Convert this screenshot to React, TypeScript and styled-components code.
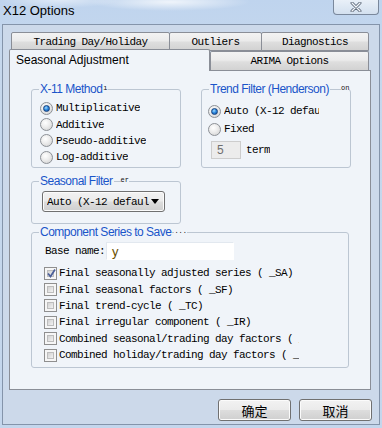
import styled, { createGlobalStyle } from 'styled-components';

const MONO = `"Liberation Mono", "DejaVu Sans Mono", monospace`;
const SANS = `"Liberation Sans", Arial, sans-serif`;
const CJK = `"Liberation Sans", "Noto Sans CJK SC", sans-serif`;
const PANEL_BG = '#f0f4f9';

const GlobalStyle = createGlobalStyle`
  html, body {
    margin: 0;
    padding: 0;
  }
  body {
    width: 382px;
    height: 428px;
    overflow: hidden;
    background: #c4d6ec;
    font-family: ${SANS};
  }
`;

const Window = styled.div`
  width: 382px;
  height: 428px;
  display: flex;
  flex-direction: column;
  box-sizing: border-box;
  background:
    radial-gradient(ellipse 80px 9px at 170px 2px, rgba(255, 255, 255, 0.75), rgba(255, 255, 255, 0)),
    radial-gradient(ellipse 60px 8px at 60px 0px, rgba(255, 255, 255, 0.5), rgba(255, 255, 255, 0)),
    linear-gradient(#bfd4ee, #c6d8ed 60px, #c4d6ec);
`;

const TitleBar = styled.div`
  height: 24px;
  flex-shrink: 0;
  display: flex;
  justify-content: space-between;
  align-items: flex-start;
  padding: 0 3px 0 3px;
  box-sizing: border-box;
`;

const Title = styled.div`
  font: 13px ${SANS};
  line-height: 21px;
  color: #000;
`;

const CloseButton = styled.div`
  width: 46px;
  height: 15px;
  box-sizing: border-box;
  border: 1px solid #7a889c;
  border-top: none;
  border-radius: 0 0 4px 4px;
  background: linear-gradient(#e9f0f8, #d3e0ef);
  display: flex;
  align-items: center;
  justify-content: center;
`;

const Client = styled.div`
  flex: 1;
  margin: 0 2px 3px 2px;
  border: 1px solid #8494aa;
  background: #ccd9ea;
  padding: 7px 0 0 6px;
  box-sizing: border-box;
  display: flex;
  flex-direction: column;
`;

const Tabs = styled.div`
  width: 362px;
  display: flex;
  flex-direction: column;
`;

const TabRow = styled.div<{ $top?: boolean }>`
  display: flex;
  align-items: flex-end;
  height: ${p => (p.$top ? '19px' : '21px')};
  padding-left: ${p => (p.$top ? '2px' : '0')};
  margin-top: ${p => (p.$top ? '0' : '-2px')};
  position: relative;
`;

const Tab = styled.div<{ $w: number }>`
  width: ${p => p.$w}px;
  height: 19px;
  box-sizing: border-box;
  border: 1px solid #8a8e97;
  border-radius: 2px 2px 0 0;
  margin-right: -1px;
  background: linear-gradient(#f3f3f3, #ebebeb 45%, #dedede 55%, #d2d2d2);
  font: 11px ${MONO};
  letter-spacing: -0.6px;
  color: #000;
  display: flex;
  align-items: center;
  justify-content: center;
`;

const LowerTab = styled(Tab)`
  border-bottom: none;
  height: 19px;
`;

const ActiveTab = styled.div`
  width: 201px;
  height: 22px;
  margin-bottom: -1px;
  box-sizing: border-box;
  border: 1px solid #8a8e97;
  border-bottom: none;
  border-radius: 2px 2px 0 0;
  background: ${PANEL_BG};
  position: relative;
  z-index: 1;
  font: 12px ${SANS};
  color: #000;
  padding: 3px 0 0 6px;
`;

const Panel = styled.div`
  width: 362px;
  height: 320px;
  box-sizing: border-box;
  border: 1px solid #8a8e97;
  background: ${PANEL_BG};
  padding: 18px 0 0 21px;
  display: flex;
  flex-direction: column;
`;

const GroupRow = styled.div`
  display: flex;
  gap: 20px;
`;

const Group = styled.div<{ $w: number; $h: number; $mt?: number; $pt: number; $pl: number }>`
  position: relative;
  width: ${p => p.$w}px;
  height: ${p => p.$h}px;
  margin-top: ${p => p.$mt ?? 0}px;
  box-sizing: border-box;
  border: 1px solid #bcc6d2;
  border-radius: 3px;
  padding: ${p => p.$pt}px 0 0 ${p => p.$pl}px;
  display: flex;
  flex-direction: column;
`;

const Legend = styled.div`
  position: absolute;
  top: -8px;
  left: 7px;
  display: flex;
  align-items: flex-start;
`;

const LegendText = styled.span`
  background: ${PANEL_BG};
  padding: 0 1px;
  font: 12px ${SANS};
  letter-spacing: -0.5px;
  line-height: 14px;
  color: #1a55c9;
  white-space: nowrap;
`;

// leftover bits of a clipped caption, drawn above the frame line
const Residue = styled.span<{ $gap: number }>`
  margin-left: ${p => p.$gap}px;
  margin-top: 3px;
  background: ${PANEL_BG};
  font: 7px ${MONO};
  line-height: 7px;
  color: #111;
  white-space: nowrap;
`;

const OptionRow = styled.div<{ $h: number }>`
  height: ${p => p.$h}px;
  display: flex;
  align-items: center;
  gap: 3px;
`;

const Label = styled.span<{ $w?: number }>`
  font: 11px ${MONO};
  letter-spacing: -0.6px;
  color: #000;
  white-space: nowrap;
  overflow: hidden;
  ${p => (p.$w ? `width: ${p.$w}px;` : '')}
`;

const RadioCircle = styled.span<{ $on?: boolean }>`
  width: 13px;
  height: 13px;
  flex-shrink: 0;
  box-sizing: border-box;
  border-radius: 50%;
  border: 1px solid #8c9096;
  background: radial-gradient(circle at 40% 35%, #ffffff 0%, #ececec 45%, #cdcdcd 100%);
  display: flex;
  align-items: center;
  justify-content: center;
  &::after {
    content: '';
    display: ${p => (p.$on ? 'block' : 'none')};
    width: 7px;
    height: 7px;
    box-sizing: border-box;
    border-radius: 50%;
    border: 1px solid #17407c;
    background: radial-gradient(circle at 40% 35%, #a6dcff 0%, #2d8ae0 45%, #0d4a9c 100%);
  }
`;

const BoxOuter = styled.span`
  width: 13px;
  height: 13px;
  flex-shrink: 0;
  box-sizing: border-box;
  border: 1px solid #8f8f8f;
  background: #f6f6f6;
  padding: 2px;
  display: flex;
  position: relative;
`;

const BoxInner = styled.span`
  flex: 1;
  border: 1px solid #bdbdbd;
  background: linear-gradient(135deg, #d2d2d2, #f2f2f2);
`;

const CheckMark = styled.svg`
  position: absolute;
  left: 1px;
  top: 0px;
`;

const TermInput = styled.div`
  width: 30px;
  height: 18px;
  box-sizing: border-box;
  border: 1px solid #cdcdcd;
  background: #ececec;
  font: 12px ${SANS};
  color: #6f6f6f;
  padding-left: 5px;
  line-height: 16px;
`;

const TermRow = styled.div`
  display: flex;
  align-items: center;
  gap: 5px;
  margin: 3px 0 0 3px;
`;

const Select = styled.div`
  width: 123px;
  height: 21px;
  box-sizing: border-box;
  border: 1px solid #707070;
  border-radius: 3px;
  box-shadow: inset 0 0 0 1px #fbfbfb;
  background: linear-gradient(#f2f2f2, #ebebeb 48%, #dddddd 52%, #cfcfcf);
  display: flex;
  align-items: center;
  justify-content: space-between;
  padding: 0 5px 0 4px;
`;

const BaseRow = styled.div`
  display: flex;
  align-items: center;
  gap: 1px;
  padding-left: 1px;
  margin-bottom: 5px;
`;

const TextBox = styled.div`
  width: 128px;
  height: 18px;
  box-sizing: border-box;
  border: 1px solid #e2e8ef;
  border-bottom-color: #ffffff;
  border-right-color: #ffffff;
  background: #ffffff;
  font: 13px ${SANS};
  color: #6a5000;
  padding-left: 5px;
  line-height: 17px;
`;

const CheckList = styled.div`
  display: flex;
  flex-direction: column;
`;

const CheckRow = styled.div`
  height: 16.4px;
  display: flex;
  align-items: center;
  gap: 2px;
`;

const ButtonRow = styled.div`
  width: 363px;
  display: flex;
  justify-content: flex-end;
  gap: 8px;
  margin-top: 9px;
`;

const Button = styled.div`
  width: 73px;
  height: 22px;
  box-sizing: border-box;
  border: 1px solid #707070;
  border-radius: 3px;
  box-shadow: inset 0 0 0 1px #fbfbfb;
  background: linear-gradient(#f2f2f2, #ebebeb 48%, #dddddd 52%, #cfcfcf);
  font: 13px ${CJK};
  color: #000;
  display: flex;
  align-items: center;
  justify-content: center;
`;

const Radio: React.FC<{ on?: boolean; label: string; h: number; w?: number }> = ({ on, label, h, w }) => (
  <OptionRow $h={h}>
    <RadioCircle $on={on} />
    <Label $w={w}>{label}</Label>
  </OptionRow>
);

const Check: React.FC<{ on?: boolean; label: string }> = ({ on, label }) => (
  <CheckRow>
    <BoxOuter>
      <BoxInner />
      {on && (
        <CheckMark width="11" height="11" viewBox="0 0 11 11">
          <path d="M2 5.5 L4.5 8.5 L9 1.5" fill="none" stroke="#4b5f99" strokeWidth="1.8" />
        </CheckMark>
      )}
    </BoxOuter>
    <Label $w={240}>{label}</Label>
  </CheckRow>
);

const series = [
  'Final seasonally adjusted series ( _SA)',
  'Final seasonal factors ( _SF)',
  'Final trend-cycle ( _TC)',
  'Final irregular component ( _IR)',
  'Combined seasonal/trading day factors ( _SF)',
  'Combined holiday/trading day factors ( _HF)',
];

const App = () => (
  <>
    <GlobalStyle />
    <Window>
      <TitleBar>
        <Title>X12 Options</Title>
        <CloseButton>
          <svg width="12" height="10" viewBox="0 0 12 10">
            <path d="M2 1 L10 9 M10 1 L2 9" stroke="#5f6b7c" strokeWidth="3" strokeLinecap="round" />
            <path d="M2 1 L10 9 M10 1 L2 9" stroke="#f5f7fa" strokeWidth="1.2" strokeLinecap="round" />
          </svg>
        </CloseButton>
      </TitleBar>
      <Client>
        <Tabs>
          <TabRow $top>
            <Tab $w={159}>Trading Day/Holiday</Tab>
            <Tab $w={93}>Outliers</Tab>
            <Tab $w={108}>Diagnostics</Tab>
          </TabRow>
          <TabRow>
            <ActiveTab>Seasonal Adjustment</ActiveTab>
            <LowerTab $w={159}>ARIMA Options</LowerTab>
          </TabRow>
        </Tabs>
        <Panel>
          <GroupRow>
            <Group $w={150} $h={79} $pt={10} $pl={8}>
              <Legend>
                <LegendText>X-11 Method</LegendText>
                <Residue $gap={0}>ı</Residue>
              </Legend>
              <Radio on label="Multiplicative" h={16.4} />
              <Radio label="Additive" h={16.4} />
              <Radio label="Pseudo-additive" h={16.4} />
              <Radio label="Log-additive" h={16.4} />
            </Group>
            <Group $w={150} $h={79} $pt={12} $pl={6}>
              <Legend>
                <LegendText>Trend Filter (Henderson)</LegendText>
                <Residue $gap={11}>on</Residue>
              </Legend>
              <Radio on label="Auto (X-12 default)" h={18} w={95} />
              <Radio label="Fixed" h={18} />
              <TermRow>
                <TermInput>5</TermInput>
                <Label>term</Label>
              </TermRow>
            </Group>
          </GroupRow>
          <Group $w={150} $h={43} $mt={13} $pt={9} $pl={10}>
            <Legend>
              <LegendText>Seasonal Filter</LegendText>
              <Residue $gap={7}>er</Residue>
            </Legend>
            <Select>
              <Label>Auto (X-12 defaul</Label>
              <svg width="8" height="5" viewBox="0 0 8 5">
                <path d="M0 0 H8 L4 5 Z" fill="#000" />
              </svg>
            </Select>
          </Group>
          <Group $w={318} $h={136} $mt={8} $pt={9} $pl={12}>
            <Legend>
              <LegendText>Component Series to Save</LegendText>
              <Residue $gap={2}>...</Residue>
            </Legend>
            <BaseRow>
              <Label>Base name:</Label>
              <TextBox>y</TextBox>
            </BaseRow>
            <CheckList>
              {series.map((s, i) => (
                <Check key={s} on={i === 0} label={s} />
              ))}
            </CheckList>
          </Group>
        </Panel>
        <ButtonRow>
          <Button>确定</Button>
          <Button>取消</Button>
        </ButtonRow>
      </Client>
    </Window>
  </>
);

export default App;
